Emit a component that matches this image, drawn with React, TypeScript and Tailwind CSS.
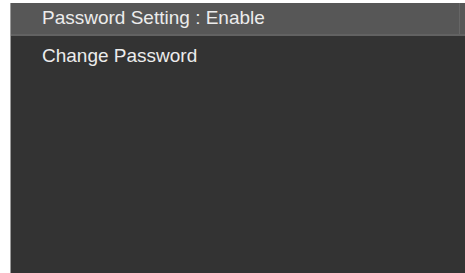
export default function App() {
  return (
    <div className="w-[465px] h-[273px] bg-white flex pl-[10px] pt-[3px] font-['Liberation_Sans',Arial,sans-serif]">
      <div className="flex-1 flex flex-col bg-[#333333] border-l border-[#9a9a9a]">
        <div className="flex h-[33px] bg-[#575757] border-b-2 border-[#626262]">
          <div className="flex-1 pl-[31px] text-[19px] leading-[29px] text-[#ececec]">
            Password Setting : Enable
          </div>
          <div className="w-px bg-[#666666] mr-[5px]" />
        </div>
        <div className="pl-[31px] pt-[5px] text-[19px] leading-[29px] text-[#ececec]">
          Change Password
        </div>
      </div>
    </div>
  );
}
